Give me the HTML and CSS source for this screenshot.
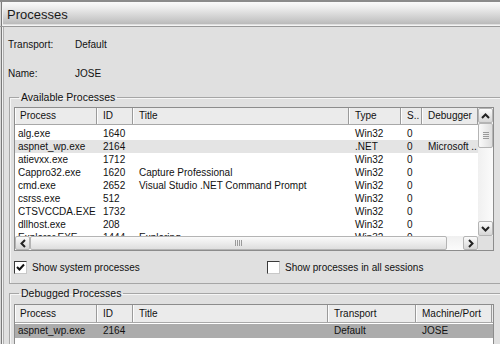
FILE: index.html
```html
<!DOCTYPE html>
<html>
<head>
    <title>Processes</title>
    <meta http-equiv="Content-Type" content="text/html;charset=utf-8" />
    <link rel="stylesheet" href="styles.css">
</head>
<body>

<div class="window">
    <!-- Title bar -->
    <div class="titlebar">Processes</div>

    <div class="content">
        <div class="info">
            <div class="info-row"><span class="info-label">Transport:</span><span>Default</span></div>
            <div class="info-row"><span class="info-label">Name:</span><span>JOSE</span></div>
        </div>

        <!-- Available processes -->
        <fieldset class="group">
            <legend>Available Processes</legend>
            <div class="listview available">
                <div class="list-main">
                    <div class="list-head">
                        <div class="hcell">Process</div>
                        <div class="hcell">ID</div>
                        <div class="hcell">Title</div>
                        <div class="hcell">Type</div>
                        <div class="hcell">S..</div>
                        <div class="hcell">Debugger</div>
                    </div>
                    <div class="list-body">
                        <div class="row"><span>alg.exe</span><span>1640</span><span></span><span>Win32</span><span>0</span><span></span></div>
                        <div class="row selected"><span>aspnet_wp.exe</span><span>2164</span><span></span><span>.NET</span><span>0</span><span>Microsoft ..</span></div>
                        <div class="row"><span>atievxx.exe</span><span>1712</span><span></span><span>Win32</span><span>0</span><span></span></div>
                        <div class="row"><span>Cappro32.exe</span><span>1620</span><span>Capture Professional</span><span>Win32</span><span>0</span><span></span></div>
                        <div class="row"><span>cmd.exe</span><span>2652</span><span>Visual Studio .NET Command Prompt</span><span>Win32</span><span>0</span><span></span></div>
                        <div class="row"><span>csrss.exe</span><span>512</span><span></span><span>Win32</span><span>0</span><span></span></div>
                        <div class="row"><span>CTSVCCDA.EXE</span><span>1732</span><span></span><span>Win32</span><span>0</span><span></span></div>
                        <div class="row"><span>dllhost.exe</span><span>208</span><span></span><span>Win32</span><span>0</span><span></span></div>
                        <div class="row"><span>Explorer.EXE</span><span>1444</span><span>Exploring</span><span>Win32</span><span>0</span><span></span></div>
                    </div>
                </div>
                <!-- vertical scrollbar -->
                <div class="vscroll">
                    <div class="sbtn"><svg width="9" height="6" viewBox="0 0 9 6"><polyline points="1,5 4.5,1.5 8,5" fill="none" stroke="#222" stroke-width="2"/></svg></div>
                    <div class="vthumb"><span></span><span></span><span></span><span></span></div>
                    <div class="vtrack"></div>
                    <div class="sbtn"><svg width="9" height="6" viewBox="0 0 9 6"><polyline points="1,1 4.5,4.5 8,1" fill="none" stroke="#222" stroke-width="2"/></svg></div>
                </div>
                <!-- horizontal scrollbar -->
                <div class="hscroll">
                    <div class="sbtn"><svg width="6" height="9" viewBox="0 0 6 9"><polyline points="5,1 1.5,4.5 5,8" fill="none" stroke="#222" stroke-width="2"/></svg></div>
                    <div class="hthumb"><span></span><span></span><span></span><span></span></div>
                    <div class="htrack"></div>
                    <div class="sbtn"><svg width="6" height="9" viewBox="0 0 6 9"><polyline points="1,1 4.5,4.5 1,8" fill="none" stroke="#222" stroke-width="2"/></svg></div>
                </div>
                <div class="corner"></div>
            </div>

            <div class="checks">
                <label class="check">
                    <span class="box"><svg width="9" height="9" viewBox="0 0 9 9"><polyline points="1,4 3.5,6.5 8,1.5" fill="none" stroke="#111" stroke-width="2"/></svg></span>
                    Show system processes
                </label>
                <label class="check">
                    <span class="box"></span>
                    Show processes in all sessions
                </label>
            </div>
        </fieldset>

        <!-- Debugged processes -->
        <fieldset class="group debugged-group">
            <legend>Debugged Processes</legend>
            <div class="listview debugged">
                <div class="list-head">
                    <div class="hcell">Process</div>
                    <div class="hcell">ID</div>
                    <div class="hcell">Title</div>
                    <div class="hcell">Transport</div>
                    <div class="hcell">Machine/Port</div>
                </div>
                <div class="list-body">
                    <div class="row active"><span>aspnet_wp.exe</span><span>2164</span><span></span><span>Default</span><span>JOSE</span></div>
                </div>
            </div>
        </fieldset>
    </div>
</div>

</body>
</html>
```

FILE: styles.css
```css
/* General */
html, body {
    margin: 0;
    height: 100%;
    overflow: hidden;
    background-color: #e0e0e0;
    font-family: "Liberation Sans", Arial, sans-serif;
    font-size: 10px;
    color: #111;
}

.window {
    height: 344px;
    overflow: hidden;
    background-color: #e0e0e0;
    box-shadow: inset 1px 0 0 #d8d8d8, inset 2px 0 0 #7a7a7a, inset 3px 0 0 #f2f2f2, inset 4px 0 0 #b0b0b0;
}

/* Title bar */
.titlebar {
    height: 24px;
    line-height: 26px;
    padding-left: 7px;
    font-size: 13px;
    color: #1a1a1a;
    border-top: 2px solid #8a8a8a;
    border-bottom: 1px solid #9a9a9a;
    background: linear-gradient(#fafafa 0%, #ececec 25%, #c8c8c8 75%, #bcbcbc 90%, #f4f4f4 96%);
    box-shadow: inset 1px 0 0 #d8d8d8, inset 2px 0 0 #7a7a7a, inset 3px 0 0 #f2f2f2;
}

.content {
    padding-top: 3px;
}

/* Transport / Name */
.info {
    padding-left: 8px;
}

.info-row {
    display: flex;
    height: 29px;
    line-height: 29px;
}

.info-label {
    width: 67px;
}

/* Group boxes */
.group {
    margin: 3px -8px 0 9px;
    padding: 0 0 0 4px;
    border: 1px solid #a6a6a6;
    box-shadow: inset 1px 1px 0 #f6f6f6;
}

.group legend {
    margin-left: 5px;
    padding: 0 2px;
    line-height: 13px;
    font-size: 10.5px;
}

.debugged-group {
    margin-top: 3px;
    height: 60px;
}

/* List views */
.listview {
    width: 478px;
    border: 1px solid #8c8c8c;
    background-color: #fff;
}

.listview.available {
    margin-top: 3px;
    height: 142px;
    display: grid;
    grid-template-columns: 463px 15px;
    grid-template-rows: 128px 14px;
}

.available .list-head,
.available .row {
    grid-template-columns: 82px 36px 216px 52px 21px 56px;
}

.debugged {
    margin-top: 4px;
    height: 60px;
}

.debugged .list-head,
.debugged .row {
    grid-template-columns: 82px 36px 195px 88px 76px;
}

.list-main {
    overflow: hidden;
}

.list-head {
    display: grid;
    height: 16px;
    background-color: #ebebeb;
    border-bottom: 1px solid #a8a8a8;
}

.debugged .list-head {
    height: 17px;
}

.hcell {
    line-height: 16px;
    padding-left: 6px;
    border-right: 1px solid #9a9a9a;
    box-shadow: inset 1px 0 0 #fdfdfd;
    white-space: nowrap;
    overflow: hidden;
}

.debugged .hcell {
    line-height: 18px;
}

.hcell:first-child {
    padding-left: 5px;
}

.list-body {
    padding-top: 2px;
}

.row {
    display: grid;
    height: 13px;
    line-height: 13px;
}

.row span {
    padding-left: 6px;
    white-space: nowrap;
    overflow: hidden;
}

.row span:first-child {
    padding-left: 3px;
}

.row.selected {
    background-color: #e4e4e4;
}

.row.active {
    background-color: #acacac;
}

.debugged .list-body {
    padding-top: 1px;
}

.debugged .row {
    height: 14px;
    line-height: 14px;
}

/* Scroll bars */
.vscroll {
    display: flex;
    flex-direction: column;
    background: linear-gradient(90deg, #f0f0f0, #fbfbfb);
}

.hscroll {
    display: flex;
    background: linear-gradient(#f0f0f0, #fbfbfb);
}

.sbtn {
    width: 15px;
    height: 15px;
    flex: none;
    box-sizing: border-box;
    display: flex;
    align-items: center;
    justify-content: center;
    border: 1px solid #b4b4b4;
    border-radius: 2px;
    background: linear-gradient(#fbfbfb, #d6d6d6);
}

.hscroll .sbtn {
    height: 14px;
}

.vthumb {
    height: 25px;
    box-sizing: border-box;
    border: 1px solid #b4b4b4;
    border-radius: 2px;
    background: linear-gradient(90deg, #fafafa, #dedede);
    display: flex;
    flex-direction: column;
    align-items: center;
    justify-content: center;
    gap: 1px;
}

.vthumb span {
    width: 6px;
    height: 1px;
    background-color: #9a9a9a;
}

.vtrack, .htrack {
    flex: 1;
}

.hthumb {
    width: 417px;
    flex: none;
    box-sizing: border-box;
    border: 1px solid #b4b4b4;
    border-radius: 2px;
    background: linear-gradient(#fafafa, #dedede);
    display: flex;
    align-items: center;
    justify-content: center;
    gap: 1px;
}

.hthumb span {
    width: 1px;
    height: 6px;
    background-color: #9a9a9a;
}

.corner {
    background-color: #e0e0e0;
}

/* Check boxes */
.checks {
    display: grid;
    grid-template-columns: 253px auto;
    height: 16px;
    margin: 8px 0 8px;
}

.check {
    display: flex;
    align-items: center;
    gap: 5px;
}

.box {
    width: 11px;
    height: 11px;
    border: 1px solid #3a3a3a;
    border-right-color: #c8c8c8;
    border-bottom-color: #c8c8c8;
    background-color: #fff;
    display: flex;
    align-items: center;
    justify-content: center;
}
```
